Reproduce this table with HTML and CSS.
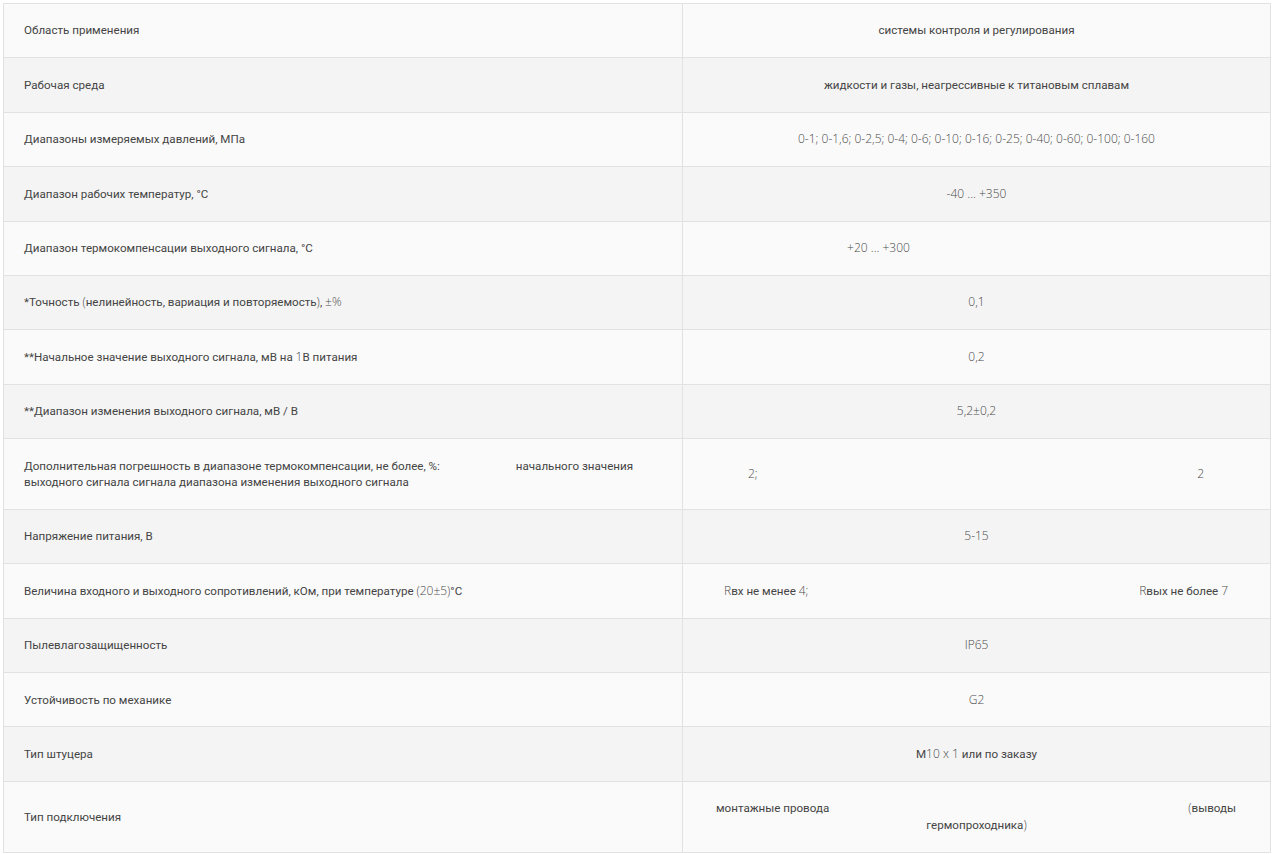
FILE: index.html
```html
<!DOCTYPE html>
<html lang="ru">
<head>
    <meta charset="UTF-8">
    <meta name="viewport" content="width=device-width, initial-scale=1.0">
    <title>Технические характеристики</title>
    <link rel="stylesheet" href="styles.css">
</head>
<body>
    <table class="specs">
        <tr>
            <td class="label">Область применения</td>
            <td class="value">системы контроля и регулирования</td>
        </tr>
        <tr>
            <td class="label">Рабочая среда</td>
            <td class="value">жидкости и газы, неагрессивные к титановым сплавам</td>
        </tr>
        <tr>
            <td class="label">Диапазоны измеряемых давлений, МПа</td>
            <td class="value num">0-1; 0-1,6; 0-2,5; 0-4; 0-6; 0-10; 0-16; 0-25; 0-40; 0-60; 0-100; 0-160</td>
        </tr>
        <tr>
            <td class="label">Диапазон рабочих температур, °С</td>
            <td class="value num">-40 ... +350</td>
        </tr>
        <tr>
            <td class="label">Диапазон термокомпенсации выходного сигнала, °С</td>
            <td class="value num"><span class="shifted">+20 ... +300</span></td>
        </tr>
        <tr>
            <td class="label">*Точность <span class="num">(</span>нелинейность, вариация и повторяемость<span class="num">)</span>, <span class="num">±%</span></td>
            <td class="value num">0,1</td>
        </tr>
        <tr>
            <td class="label">**Начальное значение выходного сигнала, мВ на <span class="num">1</span>В питания</td>
            <td class="value num">0,2</td>
        </tr>
        <tr>
            <td class="label">**Диапазон изменения выходного сигнала, мВ / В</td>
            <td class="value num">5,2±0,2</td>
        </tr>
        <tr class="tall">
            <td class="label">
                <div class="nowrap">Дополнительная погрешность в диапазоне термокомпенсации, не более, %: <span class="gap">начального значения</span></div>
                <div>выходного сигнала сигнала диапазона изменения выходного сигнала</div>
            </td>
            <td class="value num">
                <div class="spread spread-wide"><span>2;</span><span>2</span></div>
            </td>
        </tr>
        <tr>
            <td class="label">Напряжение питания, В</td>
            <td class="value num">5-15</td>
        </tr>
        <tr>
            <td class="label">Величина входного и выходного сопротивлений, кОм, при температуре <span class="num">(20±5)</span>°С</td>
            <td class="value">
                <div class="spread"><span><span class="num">R</span>вх не менее <span class="num">4;</span></span><span><span class="num">R</span>вых не более <span class="num">7</span></span></div>
            </td>
        </tr>
        <tr>
            <td class="label">Пылевлагозащищенность</td>
            <td class="value num">IP65</td>
        </tr>
        <tr>
            <td class="label">Устойчивость по механике</td>
            <td class="value num">G2</td>
        </tr>
        <tr>
            <td class="label">Тип штуцера</td>
            <td class="value">М<span class="num">10 x 1</span> или по заказу</td>
        </tr>
        <tr class="tall">
            <td class="label">Тип подключения</td>
            <td class="value">
                <div class="spread spread-wire"><span>монтажные провода</span><span><span class="num">(</span>выводы</span></div>
                <div>гермопроходника<span class="num">)</span></div>
            </td>
        </tr>
    </table>
</body>
</html>
```

FILE: styles.css
```css
body {
    margin: 0;
    padding: 3px;
    background-color: #fff;
    font-family: Roboto, 'Liberation Sans', Arial, sans-serif;
    font-size: 11.6px;
    color: #444;
}

.specs {
    width: 1268px;
    border-collapse: collapse;
    border: 1px solid #dcdcdc;
    table-layout: fixed;
}

.specs tr {
    height: 54.4px;
}

.specs tr.tall {
    height: 70.8px;
}

.specs tr:nth-child(odd) {
    background-color: #fafafa;
}

.specs tr:nth-child(even) {
    background-color: #f4f4f4;
}

.specs td {
    border: 1px solid #e2e2e2;
    padding: 0 20px;
    line-height: 16.5px;
    vertical-align: middle;
}

.specs td.label {
    width: 638px;
    text-align: left;
}

.specs td.value {
    text-align: center;
}

.nowrap {
    white-space: nowrap;
}

.num {
    font-family: 'Open Sans', 'Noto Sans', sans-serif;
    font-weight: 300;
    font-size: 12px;
    color: #4a4a4a;
}

.shifted {
    display: inline-block;
    margin-right: 196px;
}

.gap {
    margin-left: 73px;
}

.spread {
    display: flex;
    justify-content: space-between;
    padding: 0 22px 0 21px;
}

.spread-wide {
    padding: 0 46px 0 45px;
}

.spread-wire {
    padding: 0 14px 0 13px;
}
```
